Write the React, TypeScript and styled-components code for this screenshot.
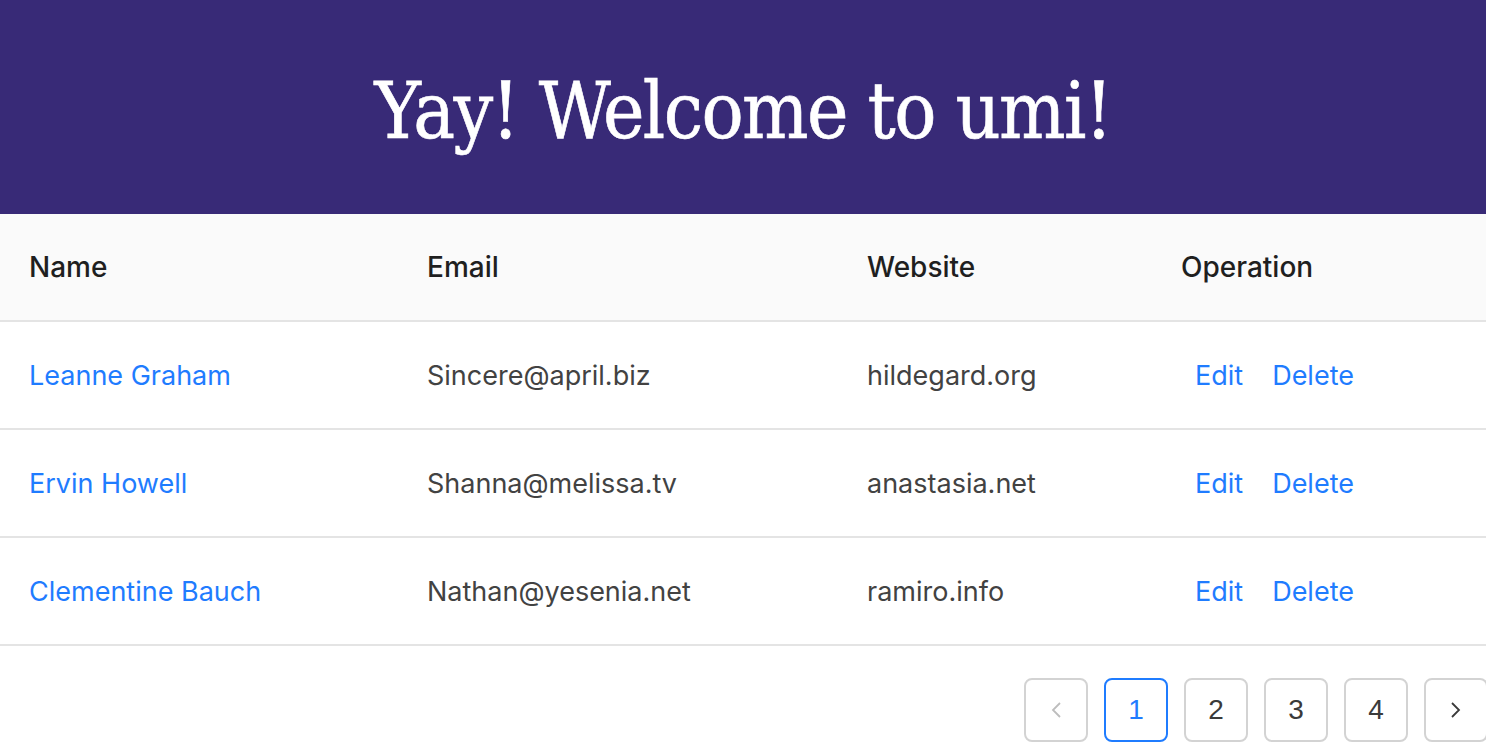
import React from "react";
import styled, { createGlobalStyle } from "styled-components";

const Global = createGlobalStyle`
  html, body { margin: 0; padding: 0; background: #fff; overflow: hidden; }
  body { font-family: Inter, "Noto Sans", sans-serif; }
`;

const Page = styled.div`
  width: 1486px;
  display: flex;
  flex-direction: column;
`;

const Banner = styled.header`
  height: 214px;
  background: #382a77;
  display: flex;
  align-items: center;
  justify-content: center;
`;

const Title = styled.h1`
  margin: 8px 0 0 0;
  color: #fff;
  font-family: "DejaVu Serif Condensed", "DejaVu Serif", Georgia, serif;
  font-stretch: condensed;
  font-weight: 400;
  font-size: 78px;
  letter-spacing: -1.6px;
  line-height: 1;
  -webkit-text-stroke: 0.6px #fff;
`;

const Table = styled.table`
  width: 100%;
  border-collapse: collapse;
  table-layout: fixed;
`;

const HeadCell = styled.th<{ $w?: number }>`
  ${(p) => (p.$w ? `width: ${p.$w}px;` : "")}
  height: 106px;
  padding: 0 0 0 29px;
  text-align: left;
  background: #fafafa;
  border-bottom: 2px solid #e4e4e4;
  color: #1f1f1f;
  font-weight: 500;
  font-size: 28px;
`;

const Cell = styled.td`
  height: 106px;
  padding: 0 0 0 29px;
  border-bottom: 2px solid #e4e4e4;
  color: #424242;
  font-size: 27px;
`;

const Link = styled.a<{ $ml?: number }>`
  color: #1f7cff;
  text-decoration: none;
  margin-left: ${(p) => p.$ml ?? 0}px;
  cursor: pointer;
`;

const Pager = styled.nav`
  display: flex;
  justify-content: flex-end;
  gap: 16px;
  margin: 32px -2px 0 0;
`;

const PageBtn = styled.div<{ $active?: boolean; $disabled?: boolean }>`
  box-sizing: border-box;
  width: 64px;
  height: 64px;
  border: 2px solid ${(p) => (p.$active ? "#1f7cff" : "#d3d3d3")};
  border-radius: 8px;
  display: flex;
  align-items: center;
  justify-content: center;
  font-family: "Liberation Sans", Arial, sans-serif;
  font-size: 28px;
  color: ${(p) => (p.$active ? "#1f7cff" : p.$disabled ? "#bdbdbd" : "#3a3a3a")};
`;

const rows = [
  { name: "Leanne Graham", email: "Sincere@april.biz", site: "hildegard.org" },
  { name: "Ervin Howell", email: "Shanna@melissa.tv", site: "anastasia.net" },
  { name: "Clementine Bauch", email: "Nathan@yesenia.net", site: "ramiro.info" },
];

const Chevron = ({ dir }: { dir: "l" | "r" }) => (
  <svg width="12" height="18" viewBox="0 0 12 18" fill="none" stroke="currentColor" strokeWidth="1.8">
    {dir === "l" ? <path d="M10 2 L3 9 L10 16" /> : <path d="M2 2 L9 9 L2 16" />}
  </svg>
);

export default function App() {
  return (
    <Page>
      <Global />
      <Banner>
        <Title>Yay! Welcome to umi!</Title>
      </Banner>
      <Table>
        <thead>
          <tr>
            <HeadCell $w={369}>Name</HeadCell>
            <HeadCell $w={411}>Email</HeadCell>
            <HeadCell $w={285}>Website</HeadCell>
            <HeadCell>Operation</HeadCell>
          </tr>
        </thead>
        <tbody>
          {rows.map((r) => (
            <tr key={r.name}>
              <Cell><Link>{r.name}</Link></Cell>
              <Cell>{r.email}</Cell>
              <Cell>{r.site}</Cell>
              <Cell>
                <Link $ml={14}>Edit</Link>
                <Link $ml={29}>Delete</Link>
              </Cell>
            </tr>
          ))}
        </tbody>
      </Table>
      <Pager>
        <PageBtn $disabled><Chevron dir="l" /></PageBtn>
        <PageBtn $active>1</PageBtn>
        <PageBtn>2</PageBtn>
        <PageBtn>3</PageBtn>
        <PageBtn>4</PageBtn>
        <PageBtn><Chevron dir="r" /></PageBtn>
      </Pager>
    </Page>
  );
}
